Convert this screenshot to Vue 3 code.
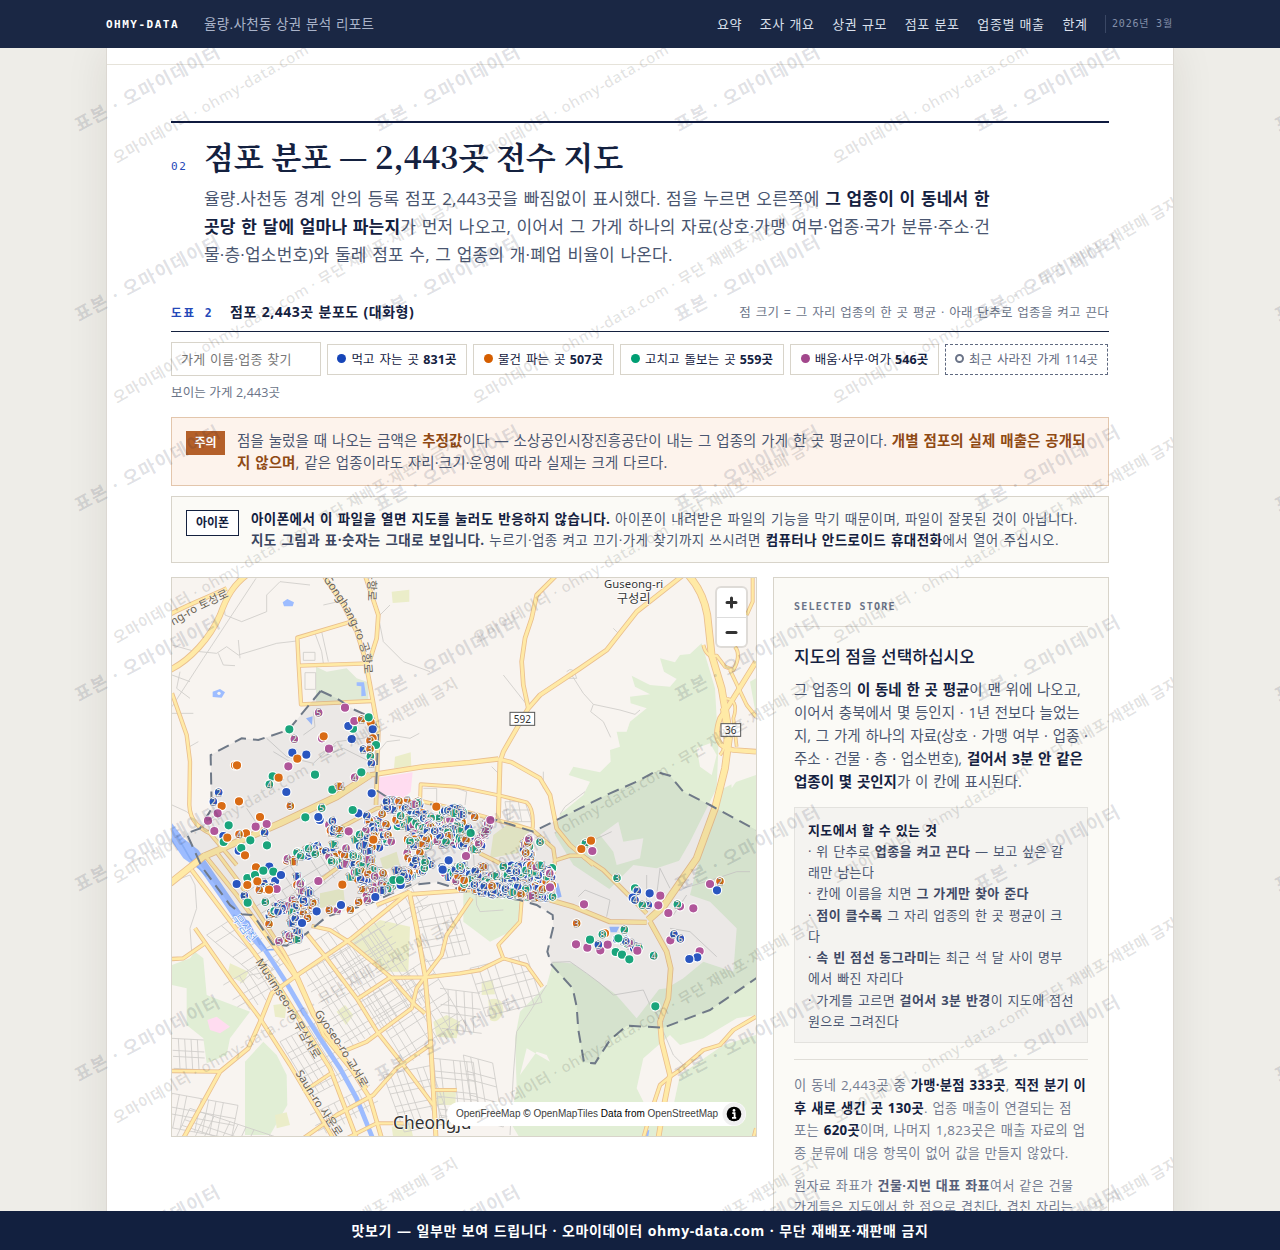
<template>
  <div class="report-page">
    <header class="topbar">
      <div class="topbar-inner">
        <span class="brand">OHMY-DATA</span>
        <span class="report-name">율량.사천동 상권 분석 리포트</span>
        <nav class="nav">
          <a v-for="item in navItems" :key="item">{{ item }}</a>
        </nav>
        <span class="report-date">2026년 3월</span>
      </div>
    </header>

    <main class="paper">
      <div class="prev-section"></div>
      <section class="section">
        <div class="section-head">
          <span class="section-no">02</span>
          <div>
            <h2 class="section-title">점포 분포 — 2,443곳 전수 지도</h2>
            <p class="lead">
              율량.사천동 경계 안의 등록 점포 2,443곳을 빠짐없이 표시했다. 점을 누르면 오른쪽에 <b>그 업종이 이 동네서 한</b><br>
              <b>곳당 한 달에 얼마나 파는지</b>가 먼저 나오고, 이어서 그 가게 하나의 자료(상호·가맹 여부·업종·국가 분류·주소·건<br>
              물·층·업소번호)와 둘레 점포 수, 그 업종의 개·폐업 비율이 나온다.
            </p>
          </div>
        </div>

        <div class="figure-head">
          <span class="figure-no">도표 2</span>
          <span class="figure-title">점포 2,443곳 분포도 (대화형)</span>
          <span class="figure-note">점 크기 = 그 자리 업종의 한 곳 평균 · 아래 단추로 업종을 켜고 끈다</span>
        </div>

        <div class="filters">
          <input v-model="keyword" class="search" placeholder="가게 이름·업종 찾기">
          <button v-for="c in categories" :key="c.name" class="chip" :class="c.key">
            <i class="dot"></i>{{ c.name }} <b>{{ c.count }}곳</b>
          </button>
          <button class="chip closed"><i class="dot"></i>최근 사라진 가게 114곳</button>
        </div>
        <div class="visible-count">보이는 가게 2,443곳</div>

        <div class="notice warn">
          <span class="tag">주의</span>
          <p>
            점을 눌렀을 때 나오는 금액은 <b>추정값</b>이다 — 소상공인시장진흥공단이 내는 그 업종의 가게 한 곳 평균이다. <b>개별 점포의 실제 매출은 공개되</b><br>
            <b>지 않으며</b>, 같은 업종이라도 자리·크기·운영에 따라 실제는 크게 다르다.
          </p>
        </div>
        <div class="notice phone">
          <span class="tag">아이폰</span>
          <p>
            <b>아이폰에서 이 파일을 열면 지도를 눌러도 반응하지 않습니다.</b> 아이폰이 내려받은 파일의 기능을 막기 때문이며, 파일이 잘못된 것이 아닙니다.<br>
            <b class="soft">지도 그림과 표·숫자는 그대로 보입니다.</b> 누르기·업종 켜고 끄기·가게 찾기까지 쓰시려면 <b>컴퓨터나 안드로이드 휴대전화</b>에서 열어 주십시오.
          </p>
        </div>

        <div class="map-row">
          <div class="map">
            <svg class="map-canvas" viewBox="6 9 1752 1674">
              <rect x="0" y="0" width="1770" height="1700" fill="#f8f4f0" />
              <path v-for="(d, i) in woods" :key="'w' + i" :d="d" fill="#e1eed5" />
              <path v-for="(d, i) in clearings" :key="'c' + i" :d="d" fill="#f8f4f0" />
              <path v-for="(d, i) in parks" :key="'p' + i" :d="d" fill="#ebedc9" />
              <path d="M438,275L470,290L530,280L560,310L595,322L595,382L438,384Z" fill="#e0ead6" />
              <path d="M622,608L728,592L722,650L690,680L640,684L622,660Z M112,1335L140,1325L180,1355L150,1375L120,1365Z" fill="#ffdcf0" />

              <path v-for="(d, i) in lanes" :key="'l' + i" :d="d" class="lane" />
              <path v-for="(d, i) in blocks" :key="'b' + i" :d="d" class="lane" />

              <path :d="riverWide" fill="#9dbcff" />
              <path d="M285,1125L350,1225L400,1310L450,1390L510,1480L560,1570L608,1690" class="river" />
              <path d="M20,780L60,850L110,905M190,1020L235,1040L270,1110M240,1060L290,1125L315,1123" class="stream" />
              <path d="M338,82L352,72L372,82L368,94L342,94ZM128,350L150,342L165,352L155,368L128,366Z M560,322L582,322L588,362L574,364L574,334L560,332Z M408,430L428,424L426,450Z M1157,925L1165,925L1175,965L1160,970Z M1318,1055L1348,1055L1340,1072L1322,1072Z M1425,1668L1438,1665L1434,1690L1425,1690Z" fill="#9dbcff" />
              <circle cx="147" cy="355" r="5" fill="#f8f4f0" />

              <path v-for="(r, i) in roads" :key="'rc' + i" :d="r[1]" class="road-case" :stroke-width="r[0] + 5" />
              <path v-for="(r, i) in roads" :key="'rf' + i" :d="r[1]" class="road" :stroke-width="r[0]" />

              <path :d="boundary + 'Z'" fill="#1a2744" fill-opacity="0.055" />
              <path :d="boundary" class="boundary" />

              <path v-for="l in pathLabels" :id="l.id" :key="l.id" :d="l.d" fill="none" />
              <text v-for="l in pathLabels" :key="'t' + l.id" class="road-label" :class="{ water: l.water }">
                <textPath :href="'#' + l.id">{{ l.text }}</textPath>
              </text>
              <g class="place">
                <text x="1391" y="38" font-size="34">Guseong-ri</text>
                <text x="1391" y="84" font-size="37">구성리</text>
                <text x="787" y="1662" font-size="52">Cheongju</text>
              </g>
              <g class="shield">
                <rect x="1020" y="412" width="74" height="39" />
                <text x="1057" y="443">592</text>
                <rect x="1653" y="446" width="59" height="38" />
                <text x="1682" y="476">36</text>
              </g>

              <g v-for="(s, i) in stores" :key="'s' + i">
                <circle :cx="s[0]" :cy="s[1]" :r="s[3] ? 13.2 : 14" :fill="colors[s[2]]" class="store" />
                <text v-if="s[3]" :x="s[0]" :y="s[1] + 10" class="store-no">{{ s[3] }}</text>
              </g>
            </svg>
            <div class="zoom">
              <button><svg viewBox="0 0 29 29"><path d="M14.5 10v9M10 14.5h9" /></svg></button>
              <button><svg viewBox="0 0 29 29"><path d="M10 14.5h9" /></svg></button>
            </div>
            <div class="attribution">
              <span><a>OpenFreeMap</a> © <a>OpenMapTiles</a> Data from <a>OpenStreetMap</a></span>
              <svg class="info" viewBox="0 0 24 24">
                <circle cx="12" cy="12" r="11.5" fill="#f0f0f0" />
                <circle cx="12" cy="12" r="7.3" />
                <circle cx="12" cy="8.4" r="1.4" fill="#fff" />
                <path d="M10.3 11.2h2.3v4.2M10 15.8h4.2" stroke="#fff" stroke-width="1.8" fill="none" />
              </svg>
            </div>
          </div>

          <aside class="panel">
            <div class="panel-label">SELECTED STORE</div>
            <h3>지도의 점을 선택하십시오</h3>
            <p class="panel-text">
              그 업종의 <b>이 동네 한 곳 평균</b>이 맨 위에 나오고,<br>
              이어서 충북에서 몇 등인지 · 1년 전보다 늘었는<br>
              지, 그 가게 하나의 자료(상호 · 가맹 여부 · 업종 ·<br>
              주소 · 건물 · 층 · 업소번호), <b>걸어서 3분 안 같은</b><br>
              <b>업종이 몇 곳인지</b>가 이 칸에 표시된다.
            </p>
            <div class="howto">
              <b class="howto-title">지도에서 할 수 있는 것</b><br>
              · 위 단추로 <b>업종을 켜고 끈다</b> — 보고 싶은 갈<br>
              래만 남는다<br>
              · 칸에 이름을 치면 <b>그 가게만 찾아 준다</b><br>
              · <b>점이 클수록</b> 그 자리 업종의 한 곳 평균이 크<br>
              다<br>
              · <b>속 빈 점선 동그라미</b>는 최근 석 달 사이 명부<br>
              에서 빠진 자리다<br>
              · 가게를 고르면 <b>걸어서 3분 반경</b>이 지도에 점선<br>
              원으로 그려진다
            </div>
            <div class="panel-foot">
              <p class="summary">
                이 동네 2,443곳 중 <b>가맹·분점 333곳</b>, <b>직전 분기 이</b><br>
                <b>후 새로 생긴 곳 130곳</b>. 업종 매출이 연결되는 점<br>
                포는 <b>620곳</b>이며, 나머지 1,823곳은 매출 자료의 업<br>
                종 분류에 대응 항목이 없어 값을 만들지 않았다.
              </p>
              <p class="source">
                원자료 좌표가 <b>건물·지번 대표 좌표</b>여서 같은 건물<br>
                가게들은 지도에서 한 점으로 겹친다. 겹친 자리는
              </p>
            </div>
          </aside>
        </div>
      </section>
    </main>

    <svg class="watermark" viewBox="0 0 1280 1250">
      <defs>
        <clipPath id="paper-area"><rect x="107" y="0" width="1066" height="1250" /></clipPath>
      </defs>
      <text v-for="(m, i) in sampleMarks" :key="'a' + i" class="mark-sample" textLength="161" :transform="`translate(${m[0]} ${m[1]}) rotate(-28)`">표본 · 오마이데이터</text>
      <g clip-path="url(#paper-area)">
        <text v-for="(m, i) in siteMarks" :key="'b' + i" class="mark-site" textLength="395" :transform="`translate(${m[0]} ${m[1]}) rotate(-30)`">오마이데이터 · ohmy-data.com · 무단 재배포·재판매 금지</text>
      </g>
    </svg>

    <footer class="bottombar">맛보기 — 일부만 보여 드립니다 · 오마이데이터 ohmy-data.com · 무단 재배포·재판매 금지</footer>
  </div>
</template>

<script setup>
import { ref } from 'vue'

const keyword = ref('')
const navItems = ['요약', '조사 개요', '상권 규모', '점포 분포', '업종별 매출', '한계']

const categories = [
  { key: 'food', name: '먹고 자는 곳', count: 831 },
  { key: 'shop', name: '물건 파는 곳', count: 507 },
  { key: 'care', name: '고치고 돌보는 곳', count: 559 },
  { key: 'study', name: '배움·사무·여가', count: 546 }
]

const colors = { b: '#2a56c0', o: '#d96b14', g: '#1aa57c', p: '#b0569a' }

// 워터마크 위치
const sampleMarks = []
for (let y = 132; y < 1400; y += 190) {
  for (let x = 79; x < 1300; x += 300) sampleMarks.push([x, y])
}
const siteMarks = []
for (let y = 164; y < 1500; y += 240) {
  for (let x = -243; x < 1173; x += 360) siteMarks.push([x, y])
}

// 지도 바탕
const woods = [
  'M1595,205L1560,237L1530,240L1515,262L1470,250L1482,290L1520,312L1500,335L1440,330L1385,302L1395,335L1440,358L1380,365L1382,385L1430,400L1380,440L1370,470L1340,470L1350,515L1320,525L1322,560L1290,592L1210,575L1196,600L1260,620L1240,660L1170,718L1155,780L1210,870L1420,1010L1480,940L1560,800L1640,640L1645,520L1635,340Z',
  'M1640,650L1700,620L1758,600L1758,1690L1050,1690L1020,1640L1040,1540L1035,1390L1050,1310L1130,1230L1150,1160L1260,1170L1400,1330L1500,1200L1600,800Z',
  'M1740,320L1758,310L1758,420Z',
  'M880,920L1055,975L1040,1060L960,1100L880,1040Z',
  'M75,1130L100,1150L110,1260L240,1310L180,1390L170,1440L110,1465L100,1390L50,1350L50,1240L6,1230L6,1170L60,1150Z',
  'M225,1460L280,1400L320,1440L350,1500L352,1590L300,1680L225,1680Z'
]
const clearings = [
  'M1580,520L1620,505L1640,540L1625,600L1590,575Z',
  'M1680,570L1705,565L1698,620L1685,640Z',
  'M1290,780L1345,740L1360,800L1420,790L1410,850L1340,870L1330,830Z',
  'M1150,1000L1250,950L1300,960L1390,870L1460,880L1550,850L1560,960L1620,980L1700,1060L1690,1190L1600,1160L1540,1210L1490,1240L1340,1260L1200,1160Z',
  'M1050,1500L1100,1430L1130,1440L1140,1460L1070,1420Z',
  'M1420,1450L1500,1380L1530,1410L1600,1390L1700,1330L1758,1320L1758,1380L1660,1410L1530,1500L1500,1640L1440,1620L1400,1540Z'
]
const parks = [
  'M665,50L718,44L718,80L668,84Z',
  'M675,545L722,532L724,576L672,580Z',
  'M970,780L1030,735L1080,760L1060,830L960,850Z',
  'M530,1105L630,1035L720,1055L715,1190L640,1190Z',
  'M180,1165L236,1190L220,1225L172,1200Z',
  'M310,1290L350,1285L345,1330L315,1325Z',
  'M500,1310L525,1290L550,1320L528,1350Z',
  'M935,1220L968,1215L975,1258L935,1260Z',
  'M955,1275Q1000,1260 1000,1310Q985,1350 960,1335Z',
  'M790,1340L830,1320L870,1340L860,1390L800,1385Z',
  'M798,1548L858,1548L856,1590L798,1590Z',
  'M450,955L520,940L525,985L450,1000Z',
  'M630,850L680,830L690,870L640,885Z',
  'M315,1620L350,1612L360,1650L320,1660Z',
  'M665,1655L720,1640L730,1690L670,1690Z'
]
const riverWide = 'M6,745L40,790L85,825L140,905L215,1015L290,1120L275,1130L200,1045L150,970L90,885L40,850L6,800Z'

const lanes = [
  'M258,10L100,250L6,395', 'M160,60L165,120L215,140L290,110L290,60L330,20L420,30',
  'M6,210L70,228L140,235L170,215L205,240L320,205L380,198', 'M145,235L160,270L195,272M205,195L210,250',
  'M460,90L505,80', 'M660,90L625,125L640,200L700,260L780,290', 'M435,175L455,230L460,265M455,170L475,260',
  'M400,232h35v24h-35z M405,293h32v50h-32z', 'M290,490L350,545L430,565L500,500L580,490', 'M430,410L435,455L400,480',
  'M310,530L360,560M470,540L520,520L600,560L650,500L690,495', 'M660,480L720,490L748,475', 'M230,700L270,760L300,800',
  'M6,690L50,710L85,740', 'M6,300L60,320M30,290L20,340L60,370M6,415L70,415M85,500L50,520',
  'M1075,395L1000,300', 'M1205,300L1240,355L1270,388L1350,405L1395,418L1410,405M1270,388L1262,410L1300,440L1322,487M1190,290q20,-20 30,20h-25',
  'M1330,160L1345,175M1120,590L1120,640M965,575L985,595', 'M1170,718L1185,695L1245,650', 'M1005,680h60l20,60h-70zM1020,675v60M1045,680l10,60M1000,705h80',
  'M1145,1162L1200,1160L1250,1195L1290,1225L1330,1260L1420,1245L1440,1290L1480,1340', 'M1130,1230L1080,1310L1040,1370L1030,1500L1020,1680',
  'M1430,990L1430,900M1460,960L1470,880L1500,940M1540,940L1640,910L1700,890L1740,890M1500,1060L1560,1070L1640,1145M1510,1020L1550,960',
  'M1225,965L1245,945L1320,975L1310,1025M1325,770L1260,800', 'M1480,1370L1510,1440L1545,1475',
  'M6,920L60,900L75,930L80,1000L60,1060L65,1130', 'M420,960L470,920L520,880', 'M910,830L920,990L930,1010L1000,1005',
  'M760,640L800,640L800,690M860,640L890,650L885,690', 'M210,1225L240,1200L300,1190L330,1150L420,1120'
]

// 시가지 골목: 시작점과 두 방향 벡터로 격자를 만든다
const grids = [
  [390, 1200, 17, -10, 15, 11, 17, 13],
  [590, 1270, 20, -13, 9, 12, 20, 10],
  [330, 1400, 17, -9, 7, 11, 18, 9],
  [430, 1100, 22, -14, 7, 14, 20, 6],
  [6, 1555, 22, 4, 9, -4, 20, 5],
  [60, 1600, 24, 8, 12, -8, 17, 5],
  [6, 1390, 19, 1, 5, 1, 18, 5],
  [790, 1450, 20, 2, 6, 2, 19, 10],
  [640, 1500, 20, -4, 7, 7, 19, 9],
  [900, 1180, 24, -6, 7, 8, 24, 6],
  [810, 1240, 24, 3, 5, 1, 24, 5],
  [880, 1440, 22, 6, 4, 4, 24, 8],
  [720, 1000, 22, -4, 6, 6, 20, 8],
  [620, 1000, 26, -16, 5, 12, 22, 3],
  [160, 1230, 24, -14, 5, 14, 22, 4],
  [110, 1080, 26, 22, 6, 22, -14, 4],
  [230, 950, 26, -16, 8, 14, 22, 4],
  [420, 1620, 18, -9, 10, 8, 16, 4]
]
const blocks = grids.map(([x, y, ux, uy, n, vx, vy, m]) => {
  let d = ''
  for (let i = 0; i <= n; i++) {
    if ((i * 7 + n) % 5 === 0) continue
    d += `M${x + ux * i},${y + uy * i}l${vx * m},${vy * m}`
  }
  for (let j = 0; j <= m; j++) {
    if (j % 3 === 1) continue
    d += `M${x + vx * j},${y + vy * j}l${ux * n},${uy * n}`
  }
  return d
})

const roads = [
  [8, 'M135,825L210,925L250,990L340,1130L385,1210L460,1380L590,1540'],
  [9, 'M65,885L250,1130L330,1240L480,1480L560,1690'],
  [9, 'M100,835L200,960L310,1110L380,1210L430,1320L530,1460L600,1570L635,1690'],
  [8, 'M75,1060L180,1210L270,1330L360,1470L490,1690'],
  [8, 'M6,1152L40,1150L105,1105'],
  [8, 'M6,1488L150,1490'],
  [8, 'M400,1690L500,1620L610,1560L680,1480L780,1410'],
  [7, 'M400,1550L490,1490'],
  [7, 'M530,1690L620,1645L700,1645'],
  [7, 'M790,1545L860,1545'],
  [10, 'M718,950L740,1060L765,1200L780,1370L798,1690'],
  [9, 'M718,950L545,1090L375,1205L305,1255L275,1330L235,1420L150,1490L40,1690'],
  [9, 'M720,958L900,945'],
  [8, 'M425,1053L480,1065L535,1100L660,1205L735,1290L765,1315'],
  [8, 'M410,1075L470,1150L560,1270L625,1375L700,1470L790,1590'],
  [8, 'M905,970L830,1080L815,1140L765,1205L740,1240L725,1300L590,1400L530,1425'],
  [7, 'M1055,975L1050,1040L985,1110L1000,1150L1070,1170L1117,1235'],
  [8, 'M1000,1150L930,1185L870,1195L765,1207L660,1208L565,1270'],
  [8, 'M440,925L500,880L600,850'],
  [8, 'M620,990L720,950'],
  [14, 'M0,285C60,255 120,190 150,120C170,65 190,30 230,0'],
  [9, 'M0,118C60,85 120,65 170,40'],
  [8, 'M6,355L50,480L60,560L58,690C60,740 90,760 120,775L200,870'],
  [9, 'M460,0L520,90L560,170L585,250L600,330L625,470L618,690'],
  [9, 'M585,0L625,120L620,190L598,260'],
  [8, 'M560,135L382,188L386,270L393,388L607,378M390,272L598,265'],
  [17, 'M0,925L100,845L330,745L500,665L600,600'],
  [11, 'M600,600L760,575L900,562L985,552'],
  [9, 'M985,552L1025,562L1110,610L1140,660L1160,760L1200,810L1270,870'],
  [8, 'M490,770L620,700L760,680L870,705L1090,765'],
  [7, 'M750,685L752,628L860,635L990,662L1070,682Q1092,700 1088,760'],
  [9, 'M1160,0L1100,60L1085,130L1065,190L1055,260L1060,330L1075,400'],
  [10, 'M1540,0L1400,110L1310,225L1230,280L1110,360L1075,400L1000,530L990,560L985,730'],
  [8, 'M1088,765L1150,820L1155,855L1145,970M1150,858L1200,842L1240,842'],
  [8, 'M930,835L1000,870L1050,890'],
  [11, 'M1140,975L1210,995L1320,1040L1430,1042'],
  [9, 'M1240,845L1300,885L1430,1015'],
  [18, 'M1555,0Q1600,50 1612,120L1625,240L1655,340L1678,480L1665,580L1650,640L1635,700L1580,850L1480,995L1435,1035'],
  [7, 'M1600,210Q1610,250 1640,242L1665,275L1690,285Q1715,240 1695,215'],
  [12, 'M1758,260L1690,370L1650,430Q1620,515 1690,525L1758,530'],
  [7, 'M1680,285L1730,390L1758,425'],
  [7, 'M1748,0L1748,80L1730,120'],
  [6, 'M1660,370Q1710,370 1690,430L1700,515M1650,540Q1680,510 1655,400'],
  [12, 'M1440,1040L1490,1130L1502,1180L1495,1270L1470,1340L1475,1400L1500,1500L1480,1600L1465,1690'],
  [8, 'M1758,1325L1690,1365L1650,1410L1600,1425L1530,1485L1500,1505L1470,1530L1440,1620L1420,1690'],
  [7, 'M1758,1660L1750,1690']
]

const boundary = 'M452,348L500,370L555,405L610,430L625,470L618,645L660,672L700,687L770,685L890,712L980,735L1090,770L1320,655L1400,620L1455,590L1500,602L1540,650L1620,690L1740,755L1780,775L1780,1195L1620,1305L1480,1358L1370,1352L1320,1395L1275,1465L1242,1462L1225,1365L1220,1295L1208,1240L1145,1170L1132,1130L1150,1055L1148,1020L1100,990L1050,975L910,955L800,922L720,930L600,985L470,1025L410,1075L350,1112L308,1108L260,1035L245,1020L215,1018L180,990L95,875L50,775L90,760L125,700L122,540L215,490L265,495L355,465L452,348'

const pathLabels = [
  { id: 'lb1', text: 'Gonghang-ro 공항로', d: 'M459,12L520,100L555,170L578,240L592,400' },
  { id: 'lb2', text: '공항로', d: 'M590,-16L594,30L592,150' },
  { id: 'lb3', text: 'ng-ro 토성로', d: 'M10,152L80,110L250,30' },
  { id: 'lb4', text: 'Musimseo-ro 무심서로', d: 'M256,1160L340,1290L395,1390L520,1600' },
  { id: 'lb5', text: 'Gyoseo-ro 교서로', d: 'M432,1315L505,1420L640,1650' },
  { id: 'lb6', text: 'Saun-ro 사운로', d: 'M376,1495L436,1590L560,1780' },
  { id: 'lb7', text: '무심천', d: 'M186,1030L215,1070L320,1190', water: true }
]

// 따로 떨어진 점포: [x, y, 업종, 겹친 수]
const single = [
  [525, 398, 'p'], [446, 413, 'p', 5], [358, 463, 'g'], [373, 492, 'p', 2], [456, 490, 'p'], [461, 484, 'o'], [477, 521, 'p'],
  [367, 533, 'b'], [409, 539, 'b'], [382, 551, 'o'], [355, 574, 'p'], [195, 571, 'o'], [201, 571, 'o'], [435, 599, 'g'],
  [308, 604, 'g'], [326, 608, 'o'], [298, 628, 'g', 4], [349, 651, 'b'], [487, 644, 'g'], [508, 634, 'o', 14], [361, 693, 'o', 3],
  [146, 652, 'b', 2], [130, 680, 'b', 2], [155, 693, 'o'], [207, 679, 'o'], [143, 715, 'p'], [114, 737, 'p'], [133, 768, 'p'],
  [176, 751, 'g'], [270, 726, 'o'], [290, 747, 'p'], [257, 755, 'p'], [284, 773, 'b', 2], [228, 775, 'o'], [207, 778, 'o', 4],
  [160, 783, 'b'], [161, 801, 'g'], [172, 788, 'o'], [241, 796, 'g'], [291, 811, 'g'], [206, 827, 'b'], [214, 819, 'g'],
  [225, 841, 'o'], [406, 727, 'g'], [455, 699, 'g', 5], [449, 735, 'b'], [445, 726, 'b'], [554, 607, 'p', 4], [574, 592, 'g'],
  [565, 715, 'b'], [548, 705, 'g'], [605, 655, 'b'], [549, 461, 'g'], [535, 453, 'b'], [553, 438, 'p'], [545, 492, 'b'], [575, 433, 'o', 2], [602, 442, 'o'],
  [596, 427, 'g'], [608, 463, 'b'], [608, 490, 'o'], [600, 497, 'o', 3], [618, 510, 'g'], [580, 523, 'b', 2], [600, 522, 'o', 3],
  [601, 544, 'g', 2], [604, 565, 'b', 2], [536, 769, 'p'], [528, 820, 'p', 4], [610, 794, 'o'], [490, 808, 'g', 12],
  [445, 918, 'p'], [517, 929, 'o'], [478, 1005, 'o', 3], [502, 1006, 'p', 2], [513, 990, 'b'], [541, 1004, 'o', 2], [566, 981, 'o', 5],
  [592, 975, 'p', 2], [616, 966, 'b'], [200, 927, 'b'], [232, 909, 'g'], [258, 877, 'o'], [223, 962, 'b', 3], [233, 983, 'g'],
  [298, 875, 'b'], [255, 900, 'g'], [280, 887, 'g'], [310, 890, 'g'], [232, 930, 'o'], [262, 919, 'o'], [320, 942, 'p'], [297, 944, 'o'],
  [268, 945, 'o', 2], [286, 981, 'g', 3], [297, 1047, 'o', 2], [333, 900, 'b'], [440, 1009, 'b'], [396, 1044, 'b'], [327, 1099, 'p', 5],
  [799, 695, 'o'], [914, 726, 'o', 2], [961, 735, 'p'], [720, 799, 'g', 5], [902, 774, 'g'], [1110, 801, 'g', 8],
  [836, 856, 'b'], [818, 884, 'b'], [888, 843, 'p'], [940, 875, 'o', 20], [1000, 875, 'g', 5], [670, 915, 'g'], [692, 930, 'b'], [690, 915, 'g'],
  [1246, 805, 'g', 2], [1263, 797, 'o'], [1234, 822, 'o'], [1267, 828, 'p'], [1341, 909, 'g', 3], [1140, 937, 'p'],
  [1242, 988, 'p'], [1220, 1045, 'o', 3], [1395, 940, 'g'], [1402, 948, 'b', 2], [1388, 968, 'b'], [1395, 975, 'b', 4], [1439, 955, 'b'],
  [1471, 962, 'p'], [1435, 990, 'b', 2], [1417, 990, 'g', 2], [1465, 991, 'p'], [1495, 1014, 'p'], [1530, 994, 'p'], [1522, 988, 'g', 2],
  [1570, 1000, 'p'], [1620, 927, 'p'], [1641, 946, 'b'], [1650, 919, 'o', 2], [1501, 1096, 'p'], [1512, 1078, 'b', 5], [1531, 1091, 'b', 6],
  [1589, 1129, 'p'], [1582, 1147, 'b'], [1558, 1152, 'b'], [1451, 1142, 'g', 4], [1456, 1294, 'g'], [1363, 1064, 'g', 2],
  [1218, 1108, 'p'], [1252, 1118, 'p'], [1260, 1094, 'g'], [1291, 1126, 'p'], [1313, 1109, 'p'], [1305, 1075, 'o'], [1297, 1078, 'g', 8],
  [1285, 1109, 'b', 2], [1337, 1131, 'g'], [1356, 1139, 'g'], [1378, 1153, 'g'], [1345, 1090, 'g'], [1402, 1127, 'p']
]

// 밀집 구간: [x1, y1, x2, y2, 퍼짐, 개수, 업종]
const clusters = [
  [650, 690, 755, 695, 16, 26], [605, 730, 650, 790, 24, 34], [690, 735, 760, 735, 22, 40], [780, 755, 885, 760, 32, 90],
  [740, 775, 860, 785, 26, 70], [825, 700, 880, 725, 14, 20], [720, 800, 775, 800, 16, 16],
  [860, 800, 930, 815, 16, 22], [960, 740, 925, 805, 5, 12, 'p'], [925, 915, 1135, 920, 20, 100], [925, 940, 1135, 955, 15, 95],
  [1070, 795, 1072, 890, 12, 42], [1030, 880, 1135, 895, 20, 44], [835, 890, 905, 915, 28, 50], [730, 850, 775, 880, 22, 34],
  [690, 890, 730, 905, 18, 16], [565, 770, 610, 820, 24, 28], [475, 745, 505, 775, 12, 9], [345, 860, 460, 815, 13, 26],
  [470, 845, 600, 865, 17, 46], [550, 885, 630, 915, 22, 56], [590, 955, 680, 935, 12, 20], [300, 1010, 400, 980, 17, 44],
  [390, 915, 415, 1000, 18, 32], [335, 1090, 385, 1080, 12, 14], [360, 1030, 410, 1020, 16, 14], [270, 940, 315, 925, 12, 7],
  [1345, 1085, 1400, 1115, 8, 16]
]
let seed = 41
function rand() {
  seed = (seed * 16807) % 2147483647
  return seed / 2147483647
}
const dense = []
for (const [x1, y1, x2, y2, spread, count, kind] of clusters) {
  for (let i = 0; i < count; i++) {
    const t = rand()
    const x = x1 + (x2 - x1) * t + (rand() * 2 - 1) * spread
    const y = y1 + (y2 - y1) * t + (rand() * 2 - 1) * spread
    const label = rand() < 0.82 ? 2 + Math.floor(rand() * rand() * 24) : 0
    dense.push([x, y, kind || 'bbbbggoop'[Math.floor(rand() * 9)], label])
  }
}
dense.sort((a, b) => (a[3] ? 1 : 0) - (b[3] ? 1 : 0))
const stores = [...dense, ...single]
</script>

<style>
body {
  margin: 0;
  background: #eeede8;
  overflow: hidden;
}
</style>

<style scoped>
.report-page {
  position: relative;
  height: 1250px;
  overflow: hidden;
  font-family: "Open Sans", "Noto Sans CJK KR", sans-serif;
  color: #4a5670;
}

p,
h2,
h3 {
  margin: 0;
}

b {
  font-weight: 700;
  color: #14213f;
}

.topbar {
  position: relative;
  z-index: 3;
  height: 48px;
  background: #1a2744;
}

.topbar-inner {
  width: 1068px;
  height: 48px;
  margin: 0 auto;
  display: flex;
  align-items: center;
  white-space: nowrap;
}

.brand {
  width: 98px;
  font: 700 11px "DejaVu Sans Mono", monospace;
  letter-spacing: 1.5px;
  color: #fff;
}

.report-name {
  flex: 1;
  padding-bottom: 2px;
  font-size: 13.5px;
  letter-spacing: 0.35px;
  word-spacing: 0.5px;
  color: #a9b3c9;
}

.nav {
  display: flex;
  gap: 17.8px;
  padding-bottom: 2px;
  font-size: 13px;
  letter-spacing: 0.58px;
  word-spacing: 0.6px;
  color: #dce1ec;
}

.report-date {
  box-sizing: border-box;
  width: 69px;
  margin-left: 17.5px;
  padding-left: 6px;
  border-left: 1px solid #3a4764;
  font: 10px/18px "DejaVu Sans Mono", "Noto Sans CJK KR", monospace;
  letter-spacing: 0.8px;
  color: #8490aa;
}

.paper {
  width: 1066px;
  height: 1202px;
  margin: 0 auto;
  background: #fff;
  border-left: 1px solid #dcd8d2;
  border-right: 1px solid #dcd8d2;
  box-shadow: 0 0 40px rgba(40, 30, 10, 0.09);
  box-sizing: content-box;
}

.prev-section {
  height: 16px;
  border-bottom: 1px solid #e6e3da;
}

.section {
  margin: 56px 64px 0;
  border-top: 2px solid #0f1a3f;
}

.section-head {
  display: grid;
  grid-template-columns: 33px 1fr;
  padding-top: 10px;
}

.section-no {
  padding-top: 26px;
  font: 11px/16px "DejaVu Sans Mono", monospace;
  letter-spacing: 1.6px;
  color: #2448b8;
}

.section-title {
  font: 700 31px/46px "Noto Serif CJK KR", "Liberation Serif", serif;
  letter-spacing: -0.1px;
  color: #14213f;
  white-space: nowrap;
}

.lead {
  margin-top: 6px;
  font-size: 17px;
  line-height: 28px;
  letter-spacing: 0.2px;
  word-spacing: 0.9px;
  white-space: nowrap;
}

.figure-head {
  display: flex;
  align-items: center;
  height: 39px;
  margin-top: 23px;
  border-bottom: 1px solid #14213f;
  white-space: nowrap;
}

.figure-no {
  width: 59px;
  font: 700 11.5px "DejaVu Sans Mono", "Noto Sans CJK KR", monospace;
  letter-spacing: 1.9px;
  color: #2448b8;
}

.figure-title {
  flex: 1;
  padding-bottom: 2px;
  font-size: 14px;
  font-weight: 700;
  letter-spacing: 0.5px;
  word-spacing: 0.8px;
  color: #14213f;
}

.figure-note {
  font-size: 12.5px;
  letter-spacing: 0.3px;
  word-spacing: 1px;
  color: #6b7488;
}

.filters {
  display: flex;
  align-items: center;
  gap: 6px;
  margin-top: 10px;
}

.search {
  width: 150px;
  height: 34px;
  padding: 0 9px;
  box-sizing: border-box;
  border: 1px solid #d8d4ca;
  background: #fff;
  font: 13px "Open Sans", "Noto Sans CJK KR", sans-serif;
  letter-spacing: 0.3px;
  word-spacing: 0.8px;
}

.search::placeholder {
  color: #777;
}

.chip {
  display: flex;
  align-items: center;
  justify-content: center;
  gap: 0 4px;
  width: 140px;
  height: 31px;
  padding: 0 0 2px;
  box-sizing: border-box;
  border: 1px solid #d8d4ca;
  background: #fff;
  font: 12.5px "Open Sans", "Noto Sans CJK KR", sans-serif;
  letter-spacing: 0.1px;
  word-spacing: 1.5px;
  color: #14213f;
  white-space: nowrap;
}

.chip.shop { width: 141px; }
.chip.care { width: 164px; }
.chip.study { width: 149px; }

.chip .dot {
  width: 9px;
  height: 9px;
  margin: 1px 1px 0 0;
  border-radius: 50%;
  background: #1645b8;
}

.chip.shop .dot { background: #d55e00; }
.chip.care .dot { background: #009e73; }
.chip.study .dot { background: #a2478c; }

.chip.closed {
  width: 163px;
  border: 1px dashed #5f6980;
  color: #5f6980;
}

.chip.closed .dot {
  box-sizing: border-box;
  border: 2px solid #6b7488;
  background: #fff;
}

.visible-count {
  height: 32px;
  margin-bottom: 9px;
  font-size: 12.5px;
  line-height: 33px;
  letter-spacing: 0.15px;
  color: #6b7488;
}

.notice {
  display: flex;
  align-items: flex-start;
  gap: 12px;
  box-sizing: border-box;
  padding: 12px 14px;
  white-space: nowrap;
}

.notice.warn {
  height: 69px;
  border: 1px solid #e3c6ac;
  background: #fdf3ec;
  font-size: 14.5px;
  line-height: 22px;
}

.warn p {
  letter-spacing: 0.13px;
  word-spacing: 0.8px;
}

.notice.warn b {
  color: #8f4a14;
}

.notice.phone {
  height: 67px;
  margin-top: 10px;
  border: 1px solid #d8d4ca;
  background: #fbfaf6;
  font-size: 13.5px;
  line-height: 21px;
}

.phone p {
  letter-spacing: 0.45px;
  word-spacing: 0.8px;
}

.notice.phone .soft {
  color: #3a4560;
}

.tag {
  box-sizing: border-box;
  width: 39px;
  height: 24px;
  margin-top: 1px;
  background: #b4602a;
  color: #fff;
  font-size: 12px;
  font-weight: 700;
  line-height: 24px;
  text-align: center;
}

.phone .tag {
  width: 53px;
  height: 26px;
  border: 1px solid #14213f;
  background: #fff;
  color: #14213f;
}

.map-row {
  display: flex;
  align-items: flex-start;
  gap: 16px;
  margin-top: 14px;
}

.map {
  position: relative;
  flex: none;
  width: 584px;
  height: 558px;
  border: 1px solid #d8d4ca;
  overflow: hidden;
}

.map-canvas {
  display: block;
  width: 584px;
  height: 558px;
}

.lane {
  fill: none;
  stroke: #d0cdca;
  stroke-width: 2.6;
}

.river {
  fill: none;
  stroke: #9dbcff;
  stroke-width: 14;
}

.stream {
  fill: none;
  stroke: #86acf5;
  stroke-width: 5;
}

.road-case {
  fill: none;
  stroke: #eabf8e;
  stroke-linejoin: round;
}

.road {
  fill: none;
  stroke: #ffeaa6;
  stroke-linejoin: round;
}

.boundary {
  fill: none;
  stroke: #6f7987;
  stroke-width: 6;
  stroke-dasharray: 36 21;
}

.road-label {
  font: 34px "Noto Sans", "Noto Sans CJK KR", sans-serif;
  fill: #6a6252;
  stroke: #f8f4f0;
  stroke-width: 2;
  paint-order: stroke;
}

.road-label.water {
  fill: #6f9ff0;
  stroke: #fff;
  stroke-width: 4;
}

.place {
  font-family: "Noto Sans", "Noto Sans CJK KR", sans-serif;
  fill: #333;
  stroke: #fff;
  stroke-width: 4;
  paint-order: stroke;
  text-anchor: middle;
}

.shield {
  font: 30px "Noto Sans", sans-serif;
  fill: #333;
  text-anchor: middle;
}

.shield rect {
  fill: #fff;
  stroke: #555;
  stroke-width: 3;
}

.store {
  stroke: #fff;
  stroke-width: 3.5;
}

.store-no {
  font: 27px "Noto Sans", sans-serif;
  text-anchor: middle;
  fill: #fff;
  stroke: #555;
  stroke-width: 3.5;
  stroke-opacity: 0.65;
  paint-order: stroke;
}

.zoom {
  position: absolute;
  top: 10px;
  right: 10px;
  width: 29px;
  border-radius: 4px;
  background: #fff;
  box-shadow: 0 0 0 2px rgba(0, 0, 0, 0.1);
}

.zoom button {
  display: block;
  width: 29px;
  height: 29px;
  padding: 0;
  border: 0;
  background: none;
}

.zoom button + button {
  border-top: 1px solid #ddd;
}

.zoom svg {
  display: block;
  stroke: #333;
  stroke-width: 3;
  stroke-linecap: round;
}

.attribution {
  position: absolute;
  right: 10px;
  bottom: 10px;
  display: flex;
  align-items: center;
  justify-content: space-between;
  width: 299px;
  height: 24px;
  padding-left: 9px;
  box-sizing: border-box;
  border-radius: 12px;
  background: #fff;
  font: 10px/20px "Liberation Sans", sans-serif;
  color: #000;
  white-space: nowrap;
}

.attribution a {
  color: #404040;
}

.info {
  width: 24px;
  height: 24px;
}

.panel {
  flex: 1;
  min-width: 0;
  box-sizing: border-box;
  height: 700px;
  padding: 0 20px;
  border: 1px solid #d8d4ca;
  background: #fbfaf6;
  white-space: nowrap;
}

.panel-label {
  height: 48px;
  border-bottom: 1px solid #dcd8d0;
  font: 700 10px/57px "DejaVu Sans Mono", monospace;
  letter-spacing: 1.25px;
  color: #6b7488;
}

.panel h3 {
  margin-top: 17px;
  font-size: 17px;
  font-weight: 500;
  line-height: 26px;
  color: #14213f;
}

.panel-text {
  margin-top: 8px;
  font-size: 14.5px;
  line-height: 23px;
  word-spacing: 1px;
}

.howto {
  height: 236px;
  margin-top: 14px;
  padding: 11.5px 13px;
  box-sizing: border-box;
  border: 1px solid #e3e2de;
  background: #f4f3f0;
  font-size: 13px;
  line-height: 21.25px;
  letter-spacing: 0.4px;
  word-spacing: 0.75px;
}

.howto b {
  color: #3f4a66;
}

.howto .howto-title {
  color: #14213f;
}

.panel-foot {
  margin-top: 16px;
  padding-top: 14px;
  border-top: 1px solid #e0ded8;
}

.summary {
  font-size: 13.3px;
  line-height: 22.5px;
  letter-spacing: 0.3px;
  word-spacing: 0.9px;
  color: #747d92;
}

.source {
  margin-top: 11px;
  font-size: 13px;
  line-height: 21px;
  letter-spacing: 0.45px;
  word-spacing: 0.7px;
  color: #747d92;
}

.source b {
  color: #56607a;
}

.watermark {
  position: absolute;
  top: 0;
  left: 0;
  z-index: 2;
  width: 1280px;
  height: 1250px;
  pointer-events: none;
}

.mark-sample {
  font-size: 18px;
  font-weight: 700;
  fill: #141c3c;
  fill-opacity: 0.14;
}

.mark-site {
  font-size: 15px;
  font-weight: 600;
  fill: #222;
  fill-opacity: 0.13;
}

.bottombar {
  position: absolute;
  left: 0;
  right: 0;
  bottom: 0;
  z-index: 3;
  height: 39px;
  background: #12203f;
  color: #fff;
  font-size: 14px;
  font-weight: 700;
  line-height: 39px;
  letter-spacing: 0.57px;
  word-spacing: 0.8px;
  text-align: center;
}
</style>
